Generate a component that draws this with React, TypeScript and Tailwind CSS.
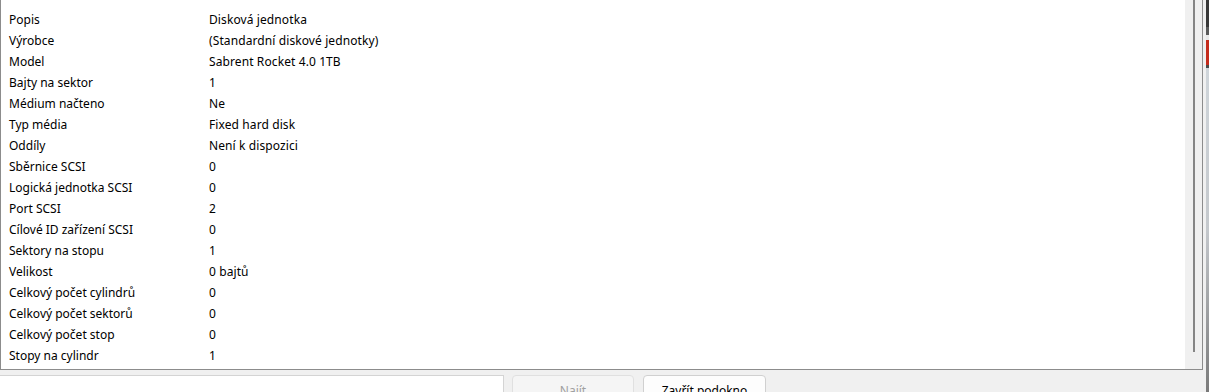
const ROWS: [string, string][] = [
  ["Popis", "Disková jednotka"],
  ["Výrobce", "(Standardní diskové jednotky)"],
  ["Model", "Sabrent Rocket 4.0 1TB"],
  ["Bajty na sektor", "1"],
  ["Médium načteno", "Ne"],
  ["Typ média", "Fixed hard disk"],
  ["Oddíly", "Není k dispozici"],
  ["Sběrnice SCSI", "0"],
  ["Logická jednotka SCSI", "0"],
  ["Port SCSI", "2"],
  ["Cílové ID zařízení SCSI", "0"],
  ["Sektory na stopu", "1"],
  ["Velikost", "0 bajtů"],
  ["Celkový počet cylindrů", "0"],
  ["Celkový počet sektorů", "0"],
  ["Celkový počet stop", "0"],
  ["Stopy na cylindr", "1"],
];

const font = { fontFamily: '"Segoe UI", "Noto Sans", "Open Sans", sans-serif' };

export default function App() {
  return (
    <div className="flex h-[392px] w-[1209px] overflow-hidden bg-[#f0f0f0] text-[12px] text-black" style={font}>
      <div className="flex w-[1206px] flex-col">
        {/* list panel */}
        <div className="flex h-[371px] w-[1203px] border-b border-l border-r border-[#8c8c8c] bg-white">
          <div className="flex-1 pt-[9px]">
            {ROWS.map(([k, v]) => (
              <div key={k} className="flex h-[21px] items-center leading-none">
                <div className="w-[208px] pl-[8px]">{k}</div>
                <div className="tracking-[0.1px]">{v}</div>
              </div>
            ))}
          </div>
          <div className="flex h-[369px] w-[17px] justify-center bg-[#f0f0f0]">
            <div className="h-[352px] w-[2px] bg-[#858585]" />
          </div>
        </div>
        {/* bottom bar */}
        <div className="flex items-start pt-[5px]">
          <div className="h-[30px] w-[504px] border-t border-r border-[#d4d4d4] bg-white" />
          <button className="ml-[8px] flex h-[30px] w-[122px] justify-center rounded-[4px] border border-[#e0e0e0] bg-[#f5f5f5] pt-[6px] text-[#a0a0a0]">
            Najít
          </button>
          <button className="ml-[9px] flex h-[30px] w-[123px] justify-center rounded-[4px] border border-[#d0d0d0] bg-[#fdfdfd] pt-[6px] text-black">
            Zavřít podokno
          </button>
        </div>
      </div>
      {/* edge of the neighbouring window */}
      <div className="flex w-[3px] flex-col">
        <div className="h-[27px] bg-[#383838]" />
        <div className="h-[8px] bg-[#5a5a5a]" />
        <div className="h-[5px] bg-[#e8e8e8]" />
        <div className="h-[25px] bg-[#c42b1c]" />
        <div className="h-[3px] bg-[#4a4a4a]" />
        <div className="flex-1 bg-gradient-to-b from-[#cfd5da] via-[#c4c8cc] to-[#7a7a7a]" />
      </div>
    </div>
  );
}
